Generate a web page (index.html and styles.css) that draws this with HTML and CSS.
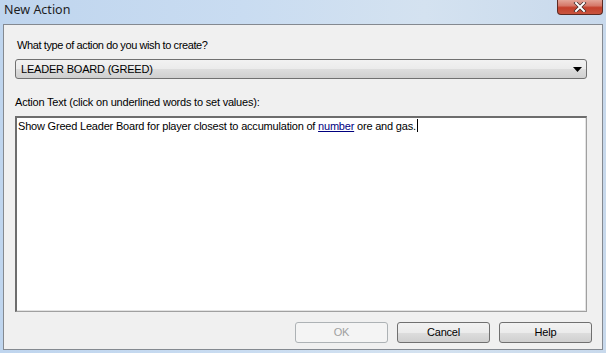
FILE: index.html
```html
<!DOCTYPE html>
<html>
<head>
<meta charset="utf-8">
<link rel="stylesheet" href="styles.css">
</head>
<body>
<div class="window">
  <div class="titlebar">
    <span class="title">New Action</span>
    <div class="close">
      <svg width="14" height="10" viewBox="0 0 14 10"><path d="M3 1 L11 9 M11 1 L3 9" stroke="#3a2a2a" stroke-width="3.4" stroke-linecap="square"/><path d="M3 1 L11 9 M11 1 L3 9" stroke="#ffffff" stroke-width="2" stroke-linecap="square"/></svg>
    </div>
  </div>
  <div class="client">
    <div class="label first">What type of action do you wish to create?</div>
    <div class="combo">
      <span>LEADER BOARD (GREED)</span>
      <svg width="9" height="5" viewBox="0 0 9 5"><path d="M0 0 H9 L4.5 5 Z" fill="#000"/></svg>
    </div>
    <div class="label second">Action Text (click on underlined words to set values):</div>
    <div class="textbox">Show Greed Leader Board for player closest to accumulation of <u class="link">number</u> ore and gas.<span class="caret"></span></div>
    <div class="buttons">
      <div class="btn disabled">OK</div>
      <div class="btn">Cancel</div>
      <div class="btn">Help</div>
    </div>
  </div>
</div>
</body>
</html>
```
FILE: styles.css
```css
html, body { margin: 0; padding: 0; }
body { width: 606px; height: 353px; overflow: hidden; font-family: "Liberation Sans", Arial, sans-serif; }
.window {
  width: 606px; height: 353px; box-sizing: border-box;
  background: linear-gradient(90deg, #bfd5ee 0%, #c9dcf1 40%, #d4e2f0 70%, #c8d9ec 100%);
  display: flex; flex-direction: column;
}
.titlebar {
  height: 24px; display: flex; align-items: flex-start; justify-content: space-between;
  padding-left: 4px; padding-right: 3px;
}
.title { font-family: "Noto Sans", "Liberation Sans", sans-serif; font-size: 12.5px; color: #1e1e1e; margin-top: 1px; }
.close {
  width: 46px; height: 15px; box-sizing: border-box;
  border: 1px solid #5c2a22; border-top: none; border-radius: 0 0 4px 4px;
  background: linear-gradient(#e4a598 0%, #d6796a 40%, #c4402c 55%, #c8553f 100%);
  display: flex; align-items: center; justify-content: center;
}
.client {
  flex: 1; margin: 0 3px 3px 3px; background: #f0f0f0;
  border: 1px solid #848990;
  padding: 0 15px 0 11px;
  display: flex; flex-direction: column;
  font-size: 11px; line-height: 13px; letter-spacing: -0.2px; color: #000;
}
.label.first { margin-top: 14px; margin-left: 2px; letter-spacing: -0.4px; }
.combo {
  margin-top: 7px; height: 20px; box-sizing: border-box;
  border: 1px solid #707070; border-radius: 3px;
  background: linear-gradient(#f2f2f2 0%, #ebebeb 50%, #dddddd 51%, #cfcfcf 100%);
  display: flex; align-items: center; justify-content: space-between;
  padding: 0 4px 0 5px;
}
.label.second { margin-top: 17px; }
.textbox {
  margin-top: 7px; height: 196px; box-sizing: border-box;
  background: #fff;
  border-top: 2px solid #6d6d6d; border-left: 2px solid #6d6d6d;
  border-right: 1px solid #a0a0a0; border-bottom: 1px solid #a0a0a0;
  box-shadow: inset -1px -1px 0 #e3e3e3;
  padding: 1px 1px;
}
.link { color: #00007f; }
.caret { display: inline-block; width: 1px; height: 13px; background: #000; vertical-align: -2px; margin-left: 1px; }
.buttons { display: flex; justify-content: flex-end; gap: 9px; margin-top: 10px; margin-right: -5px; }
.btn {
  width: 93px; height: 21px; box-sizing: border-box;
  border: 1px solid #707070; border-radius: 3px;
  background: linear-gradient(#f2f2f2 0%, #ebebeb 50%, #dddddd 51%, #cfcfcf 100%);
  display: flex; align-items: center; justify-content: center;
}
.btn.disabled { border-color: #adb2b5; background: #f4f4f4; color: #a0a0a0; }
```
